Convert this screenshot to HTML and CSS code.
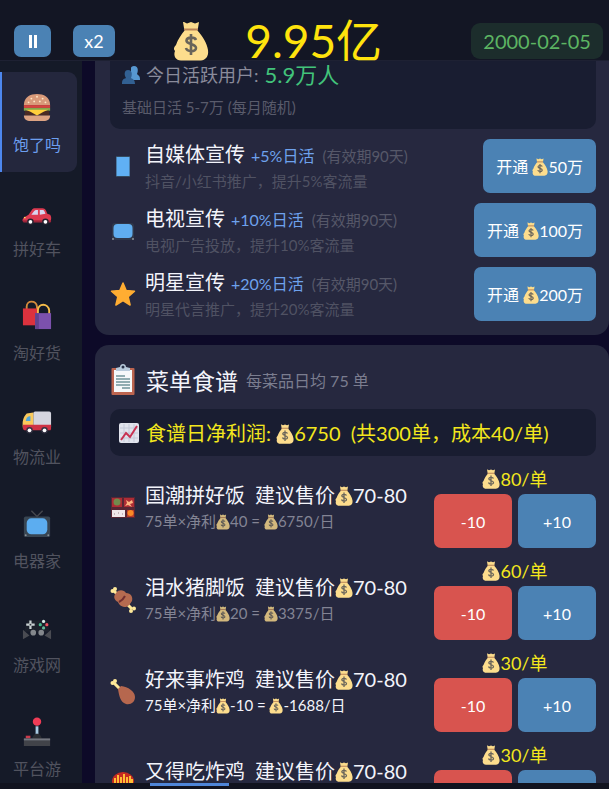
FILE: index.html
```html
<!DOCTYPE html>
<html lang="zh-CN">
<head>
<meta charset="utf-8">
<meta name="viewport" content="width=device-width, initial-scale=1">
<title>饱了吗</title>
<link rel="stylesheet" href="styles.css">
</head>
<body>
<svg class="defs" aria-hidden="true">
  <symbol id="bag" viewBox="0 0 36 40">
    <path d="M11 1l3 1.500 4-1.500 4 1.500 4-1.500-1 6 -1 3H12l-1-3-1-6z" fill="#fbdc8c"/>
    <path d="M12 9h12c6 7 10 13 11 20 1 7-3 10-7 10.500H8C3 39.500 0 35 2 30c-2-2-1-4 1-6C5 18 8 14 12 9z" fill="#fddd8d"/>
    <path d="M12 8.500h12" stroke="#b98357" stroke-width="2.200" stroke-linecap="round"/>
    <path d="M23 19c-1-3-9-3.500-9.500.500-.3 4 9.500 3 9.500 7.500 0 4.500-9 4-10 0M18 13v21" fill="none" stroke="#69645a" stroke-width="2.600"/>
  </symbol>
</svg>

<header class="topbar">
  <div class="speed">
    <button class="btn small" type="button" aria-label="暂停"><svg width="10" height="13" viewBox="0 0 10 13"><path d="M2.500 0v13M7.500 0v13" stroke="#fff" stroke-width="3"/></svg></button>
    <button class="btn small x2" type="button">x2</button>
  </div>
  <div class="money"><svg class="purse"><use href="#bag"/></svg><strong>9.95亿</strong></div>
  <time class="date" datetime="2000-02-05">2000-02-05</time>
</header>

<div class="body">
  <nav class="side">
    <a class="tab active" href="#food">
      <svg viewBox="0 0 32 32"><path d="M2 14C2 5 9 2 16 2s14 3 14 12z" fill="#d99a7a"/><g fill="#ffe6c4"><circle cx="10" cy="7" r="1"/><circle cx="16" cy="5" r="1"/><circle cx="22" cy="7" r="1"/><circle cx="7" cy="11" r="1"/><circle cx="13" cy="10" r="1"/><circle cx="19" cy="10" r="1"/><circle cx="25" cy="11" r="1"/></g><path d="M2 14h28v3H2z" fill="#d6453f"/><path d="M2 17h28v3H2z" fill="#83a84b"/><path d="M3 20h26v5H3z" fill="#4b2b24"/><path d="M4 19h24l-5 2-7 4-7-4z" fill="#ffcf3c"/><path d="M2 25h28c0 4-3 6-7 6H9c-4 0-7-2-7-6z" fill="#dda383"/></svg>
      <span>饱了吗</span></a>
    <a class="tab" href="#car">
      <svg viewBox="0 -5 32 32"><path d="M2 18l5-3 4-6c1-1 2-1 4-1h7c3 0 4 3 5 6l3 1c2 3 1 6 0 8H2c-2-1-2-3 0-5z" fill="#dd3a50"/><path d="M10 15l3-4c1-1 2-1 4-1v5zM19 10h3c2 0 2 2 3 4l-6 1z" fill="#d9d5ef"/><path d="M1 21h30v2H1z" fill="#9c2439"/><circle cx="9" cy="22.500" r="3.500" fill="#252330"/><circle cx="25" cy="22.500" r="3.500" fill="#252330"/><circle cx="9" cy="22.500" r="2" fill="#fff"/><circle cx="25" cy="22.500" r="2" fill="#fff"/><circle cx="3" cy="18" r="1" fill="#ffd166"/></svg>
      <span>拼好车</span></a>
    <a class="tab" href="#shop">
      <svg viewBox="0 0 32 32"><path d="M5 11V7c0-7 10-7 11 0v4" fill="none" stroke="#d58b3c" stroke-width="2"/><path d="M1 9h16v18H1z" fill="#dc323e"/><path d="M17 15v-4c0-8 11-8 12 0v4" fill="none" stroke="#f6bd4a" stroke-width="2"/><path d="M14 14h17v17H14z" fill="#7c51ad"/><path d="M14 14h4v17h-4z" fill="#62438f"/></svg>
      <span>淘好货</span></a>
    <a class="tab" href="#truck">
      <svg viewBox="0 -3 32 32"><rect x="12" y="5" width="19" height="18" rx="2" fill="#d5d5df"/><path d="M12 6v17H1c-1-7 0-12 4-16z" fill="#fac95c"/><path d="M1 19h30v4c0 2-1 2-3 2H3c-2 0-2-2-2-6z" fill="#cf3145"/><path d="M4 15c1-4 2-5 5-5v5z" fill="#50a5d9"/><circle cx="8" cy="25" r="3.500" fill="#353344"/><circle cx="24" cy="25" r="3.500" fill="#353344"/><circle cx="8" cy="25" r="2" fill="#fff"/><circle cx="24" cy="25" r="2" fill="#fff"/></svg>
      <span>物流业</span></a>
    <a class="tab" href="#tv">
      <svg viewBox="0 -1 32 32"><path d="M10 2l6 6 6-6" fill="none" stroke="#45474e" stroke-width="1.500"/><rect x="2" y="8" width="28" height="22" rx="2" fill="#384552"/><rect x="5" y="10" width="22" height="17" rx="5" fill="#5cadf0"/><circle cx="4" cy="28" r="1" fill="#8b9095"/><circle cx="28" cy="28" r="1" fill="#8b9095"/></svg>
      <span>电器家</span></a>
    <a class="tab" href="#game">
      <svg viewBox="0 -2 32 32"><path d="M6 7h20l4 12H2z" fill="#1c212c"/><path d="M1 17l7 6-7 4zM31 17l-7 6 7 4z" fill="#494b52"/><path d="M9 7v9M4.500 11.500h9" stroke="#c9d2d3" stroke-width="2.400"/><circle cx="9" cy="11.500" r="1" fill="#30333c"/><circle cx="23" cy="8" r="1.700" fill="#d8ebe8"/><circle cx="19.500" cy="11.500" r="1.700" fill="#43b98b"/><circle cx="26.500" cy="11.500" r="1.700" fill="#ef5260"/><circle cx="23" cy="15" r="1.700" fill="#66bc9b"/><circle cx="12" cy="20" r="3" fill="#83878c"/><circle cx="20.500" cy="20" r="3" fill="#83878c"/></svg>
      <span>游戏网</span></a>
    <a class="tab" href="#arcade">
      <svg viewBox="0 -3 32 32"><path d="M14.500 8h3v15h-3z" fill="#a8cbe3"/><circle cx="16" cy="3" r="4.500" fill="#ef3c56"/><path d="M11 22c0-8 10-8 10 0z" fill="#2a2d33"/><path d="M4 18h5v3H4z" fill="#c93b4c"/><path d="M2 21h28v8H2z" fill="#414349"/><path d="M2 22h28" stroke="#747780" stroke-width="2"/></svg>
      <span>平台游</span></a>
  </nav>

  <main class="content">
    <section class="card first">
      <div class="info users">
        <p class="active-users"><svg width="18" height="18" viewBox="0 0 18 18"><path d="M12 0c5 0 4 6 3 8 2 2 3 2 3 6h-9V2c0-1 1-2 3-2z" fill="#5798d2"/><path d="M6 4c5 0 4 6 3 8 2 1 4 2 4 6H0c0-4 1-5 4-6C2 9 2 4 6 4z" fill="#326092"/></svg>今日活跃用户: <b>5.9万人</b></p>
        <p class="hint">基础日活 5-7万 (每月随机)</p>
      </div>
      <ul class="ads">
        <li>
          <svg class="icon" viewBox="0 0 26 26"><path d="M6 3h14v21H6z" fill="#344a5e"/><path d="M6.500 4h13v19h-13z" fill="#60b0f4"/></svg>
          <div class="text"><h3>自媒体宣传<em>+5%日活</em><small>(有效期90天)</small></h3><p>抖音/小红书推广，提升5%客流量</p></div>
          <button class="btn" type="button">开通 <svg class="coin"><use href="#bag"/></svg>50万</button>
        </li>
        <li>
          <svg class="icon" viewBox="0 0 26 26"><rect x="2" y="6" width="22" height="17" rx="3" fill="#30384a"/><rect x="3.500" y="7" width="19" height="14" rx="4" fill="#60aef0"/><circle cx="3" cy="22" r="1" fill="#8d9298"/><circle cx="23" cy="22" r="1" fill="#8d9298"/></svg>
          <div class="text"><h3>电视宣传<em>+10%日活</em><small>(有效期90天)</small></h3><p>电视广告投放，提升10%客流量</p></div>
          <button class="btn" type="button">开通 <svg class="coin"><use href="#bag"/></svg>100万</button>
        </li>
        <li>
          <svg class="icon" viewBox="0 0 26 26"><path d="M13 2l3.200 7.500 8.300.800-6.300 5.500 1.900 8.200L13 19.700 5.900 24l1.900-8.200-6.300-5.500 8.300-.800z" fill="#ffad32" stroke="#ffad32" stroke-width="1.500" stroke-linejoin="round"/></svg>
          <div class="text"><h3>明星宣传<em>+20%日活</em><small>(有效期90天)</small></h3><p>明星代言推广，提升20%客流量</p></div>
          <button class="btn" type="button">开通 <svg class="coin"><use href="#bag"/></svg>200万</button>
        </li>
      </ul>
    </section>

    <section class="card menu">
      <div class="title">
        <svg width="26" height="32" viewBox="0 0 26 32"><rect x="1.500" y="4" width="23" height="27" rx="1" fill="#bd6550"/><path d="M4 6h18v22H4z" fill="#f6f8fa"/><path d="M6 7V4l4-1c0-4 6-4 6 0l4 1v3z" fill="#b9cbdc"/><circle cx="13" cy="3" r="1.500" fill="#29334a"/><path d="M6 12h9M6 15h14M6 18h14M6 21h14M12 24h8" stroke="#72949b" stroke-width="1.300"/></svg>
        <h2>菜单食谱</h2><span>每菜品日均 75 单</span>
      </div>
      <p class="info profit"><svg width="20" height="20" viewBox="0 0 20 20"><rect width="20" height="20" rx="2" fill="#e1e4ed"/><path d="M5 1v18M10 1v18M15 1v18M1 5h18M1 10h18M1 15h18" stroke="#c4c9d8"/><path d="M2 17l5-7 4 4 7-11" fill="none" stroke="#c83252" stroke-width="2"/></svg><span>食谱日净利润: <svg class="coin"><use href="#bag"/></svg>6750&nbsp; (共300单，成本40/单)</span></p>
      <ul class="dishes">
        <li>
          <svg class="icon" viewBox="0 0 26 26"><path d="M1 2h24v21H1z" fill="#582634"/><path d="M2 3h10v9H2zM14 3h10v9H14z" fill="#ae2c35"/><circle cx="7" cy="7" r="3.500" fill="#718b4c"/><path d="M16 5l3 2 3-2 1 3-3 1 2 3-4-2-3 1 2-3z" fill="#ffb581"/><path d="M2 15h13v7H2z" fill="#f0e8ea"/><path d="M17 15h7v7h-7z" fill="#b93b28"/><circle cx="20.500" cy="18" r="3" fill="#fa8927"/><path d="M4 19h1M8 18h1M12 19h1" stroke="#99848b"/></svg>
          <div class="text"><h3>国潮拼好饭<span>建议售价<svg class="coin"><use href="#bag"/></svg>70-80</span></h3><p>75单×净利<svg class="coin"><use href="#bag"/></svg>40 = <svg class="coin"><use href="#bag"/></svg>6750/日</p></div>
          <div class="price"><output><svg class="coin"><use href="#bag"/></svg>80/单</output><button class="btn red" type="button">-10</button><button class="btn" type="button">+10</button></div>
        </li>
        <li>
          <svg class="icon" viewBox="0 0 26 26"><path d="M4 4l18 18" stroke="#ffe99a" stroke-width="3"/><g fill="#ffe99a"><circle cx="2.500" cy="4" r="2"/><circle cx="5" cy="2" r="2"/><circle cx="21" cy="24" r="2"/><circle cx="24" cy="21.500" r="2"/></g><path d="M6 6c3-4 8-3 10 0 5 0 7 4 6 8-2 3-3 5-6 6-4 0-7-2-8-5-4-2-5-6-2-9z" fill="#b66b50"/><path d="M9 15c2-1 5-4 6-6" fill="none" stroke="#732f30" stroke-width="2"/></svg>
          <div class="text"><h3>泪水猪脚饭<span>建议售价<svg class="coin"><use href="#bag"/></svg>70-80</span></h3><p>75单×净利<svg class="coin"><use href="#bag"/></svg>20 = <svg class="coin"><use href="#bag"/></svg>3375/日</p></div>
          <div class="price"><output><svg class="coin"><use href="#bag"/></svg>60/单</output><button class="btn red" type="button">-10</button><button class="btn" type="button">+10</button></div>
        </li>
        <li class="loss">
          <svg class="icon" viewBox="0 0 26 26"><path d="M4 4l6 6" stroke="#ffe99a" stroke-width="3"/><circle cx="2.500" cy="4" r="2" fill="#ffe99a"/><circle cx="5" cy="2" r="2" fill="#ffe99a"/><path d="M8 10l3-3c7 1 14 5 14 11 0 5-4 8-9 7-6-2-7-9-8-15z" fill="#b6674e"/></svg>
          <div class="text"><h3>好来事炸鸡<span>建议售价<svg class="coin"><use href="#bag"/></svg>70-80</span></h3><p>75单×净利<svg class="coin"><use href="#bag"/></svg>-10 = <svg class="coin"><use href="#bag"/></svg>-1688/日</p></div>
          <div class="price"><output><svg class="coin"><use href="#bag"/></svg>30/单</output><button class="btn red" type="button">-10</button><button class="btn" type="button">+10</button></div>
        </li>
        <li class="loss">
          <svg class="icon" viewBox="0 0 26 26"><ellipse cx="13" cy="10" rx="11" ry="9" fill="#c52b22"/><path d="M5 16V7M8 16V4M11 16V6M14 16V3M17 16V6M20 16V5M22 16V8" stroke="#ffbd35" stroke-width="2"/><path d="M2 14h22l-3 11H5z" fill="#df4130"/></svg>
          <div class="text"><h3>又得吃炸鸡<span>建议售价<svg class="coin"><use href="#bag"/></svg>70-80</span></h3></div>
          <div class="price"><output><svg class="coin"><use href="#bag"/></svg>30/单</output><button class="btn red" type="button" aria-label="降价"></button><button class="btn" type="button" aria-label="涨价"></button></div>
        </li>
      </ul>
    </section>
  </main>
</div>
<footer class="bottom"><span class="marker"></span></footer>
</body>
</html>
```
FILE: styles.css
```css
* { box-sizing: border-box; }
body, h2, h3, p, ul { margin: 0; padding: 0; font-weight: 400; }
ul { list-style: none; }

body {
  display: flex;
  flex-direction: column;
  height: 100vh;
  overflow: hidden;
  background: #0d0a28;
  color: #f3f4fb;
  font-family: Lato, "Noto Sans CJK SC", sans-serif;
  font-size: 16px;
}

.defs { position: absolute; width: 0; height: 0; }
svg { flex: none; }
.coin { width: 18px; height: 20px; vertical-align: -3px; }

.btn {
  height: 54px;
  padding: 0 13px;
  border: 0;
  border-radius: 7px;
  background: #4b82b4;
  color: #fff;
  font: inherit;
  white-space: nowrap;
}
.btn.red { background: #d8544f; }
.btn .coin { width: 16px; height: 18px; }

/* top bar */
.topbar {
  display: flex;
  flex: none;
  align-items: center;
  justify-content: space-between;
  height: 61px;
  padding: 22px 6px 0 14px;
  background: #131624;
  border-bottom: 1px solid #1e2133;
}
.speed { display: flex; gap: 22px; }
.btn.small {
  display: flex;
  align-items: center;
  justify-content: center;
  width: 37px;
  height: 32px;
  padding: 0;
}
.btn.small.x2 { width: 42px; font-size: 18px; }
.money { display: flex; align-items: center; gap: 36px; margin-right: 31px; }
.purse { width: 36px; height: 40px; }
.money strong { color: #ffe30d; font-size: 46px; font-weight: 400; line-height: 40px; white-space: nowrap; }
.date {
  padding: 0 12px;
  border-radius: 9px;
  background: #1c2d2c;
  color: #5cb563;
  font-size: 20px;
  line-height: 36px;
  white-space: nowrap;
}

/* sidebar */
.body { display: flex; flex: 1; min-height: 0; }
.side {
  display: flex;
  flex: none;
  flex-direction: column;
  gap: 4px;
  width: 82px;
  padding: 11px 5px 0 0;
  overflow: hidden;
  background: #151a28;
}
.tab {
  display: flex;
  flex: none;
  flex-direction: column;
  align-items: center;
  height: 100px;
  padding: 20px 5px 0 0;
  gap: 11px;
  border-left: 2px solid transparent;
  border-radius: 0 9px 9px 0;
  color: #51535f;
  line-height: 24px;
  text-decoration: none;
}
.tab svg { width: 30px; height: 30px; }
.tab.active { border-left-color: #4d87ee; background: #24273d; color: #6c9ff0; }

/* content */
.content {
  display: flex;
  flex: 1;
  flex-direction: column;
  gap: 10px;
  min-width: 0;
  padding-left: 13px;
  overflow: hidden;
}
.card { flex: none; padding: 0 13px 9px 15px; border-radius: 14px; background: #26283f; }
.card.first { border-radius: 0 0 14px 14px; }
.info { border-radius: 10px; background: #191d31; }
.users { height: 68px; padding: 0 12px; margin-bottom: 5px; border-radius: 0 0 10px 10px; }
.active-users { display: flex; align-items: center; gap: 6px; color: #8a8b9b; font-size: 18px; line-height: 28px; }
.active-users b { color: #42c37b; font-size: 22px; font-weight: 400; }
.hint { padding-top: 7px; color: #595b6b; font-size: 15px; line-height: 22px; }

.ads li, .dishes li { display: flex; align-items: center; gap: 9px; }
.ads li { height: 64px; }
.icon { width: 26px; height: 26px; }
.text { flex: 1; min-width: 0; white-space: nowrap; }
.text h3 { font-size: 20px; line-height: 26px; }
.text p { font-size: 15px; line-height: 24px; }
.text em { margin-left: 6px; color: #6ea2ed; font-size: 16px; font-style: normal; }
.text small { margin-left: 8px; color: #565869; font-size: 15px; }
.ads .text { padding-top: 2px; }
.ads p { color: #505263; }

.title { display: flex; align-items: center; height: 64px; padding-top: 6px; }
.title h2 { margin: 0 8px 0 10px; font-size: 23px; }
.title span { color: #7b7d8f; }
.profit { display: flex; align-items: center; gap: 7px; height: 47px; padding-left: 9px; color: #f3e71d; font-size: 20px; white-space: nowrap; }

.dishes { display: grid; gap: 11px; padding-top: 11px; }
.dishes li { height: 81px; }
.dishes h3 { padding-bottom: 1px; }
.dishes li:last-child h3 { padding-bottom: 25px; }
.dishes h3 span { margin-left: 10px; }
.dishes p { color: #838494; }
.dishes p .coin { width: 14px; height: 16px; opacity: .8; }
.dishes .loss p { color: #f3f4fb; }
.dishes .loss p .coin { opacity: 1; }
.price { display: grid; grid-template-columns: 78px 78px; gap: 3px 6px; }
.price output { grid-column: 1 / -1; color: #f3e71d; font-size: 18px; line-height: 24px; text-align: center; }

/* bottom edge */
.bottom { flex: none; height: 6px; padding-left: 150px; background: #11131f; }
.marker { display: block; width: 79px; height: 3px; background: #4f86d9; }
```
